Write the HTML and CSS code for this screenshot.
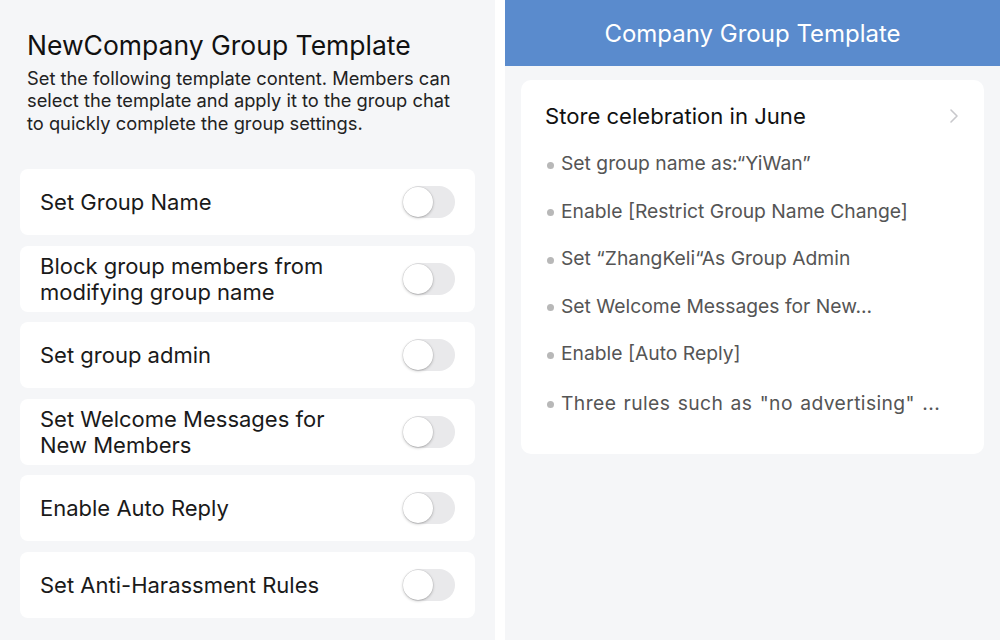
FILE: index.html
```html
<!DOCTYPE html>
<html>
<head>
<meta charset="utf-8">
<link rel="stylesheet" href="styles.css">
</head>
<body>
<div class="page">
  <section class="left">
    <h1 class="title">NewCompany Group Template</h1>
    <p class="desc">Set the following template content. Members can select the template and apply it to the group chat to quickly complete the group settings.</p>
    <div class="list">
      <div class="row"><span class="label">Set Group Name</span><span class="toggle"><span class="knob"></span></span></div>
      <div class="row"><span class="label">Block group members from modifying group name</span><span class="toggle"><span class="knob"></span></span></div>
      <div class="row"><span class="label">Set group admin</span><span class="toggle"><span class="knob"></span></span></div>
      <div class="row"><span class="label">Set Welcome Messages for New Members</span><span class="toggle"><span class="knob"></span></span></div>
      <div class="row"><span class="label">Enable Auto Reply</span><span class="toggle"><span class="knob"></span></span></div>
      <div class="row"><span class="label">Set Anti-Harassment Rules</span><span class="toggle"><span class="knob"></span></span></div>
    </div>
  </section>
  <section class="right">
    <header class="bar">Company Group Template</header>
    <div class="card">
      <div class="card-head">
        <span class="card-title">Store celebration in June</span>
        <svg class="chev" width="12" height="18" viewBox="0 0 12 18"><path d="M3 3 L9 9 L3 15" fill="none" stroke="#c8c8cc" stroke-width="1.6" stroke-linecap="round" stroke-linejoin="round"/></svg>
      </div>
      <ul class="items">
        <li>Set group name as:“YiWan”</li>
        <li>Enable [Restrict Group Name Change]</li>
        <li>Set “ZhangKeli“As Group Admin</li>
        <li>Set Welcome Messages for New...</li>
        <li>Enable [Auto Reply]</li>
        <li class="last">Three rules such as "no advertising" ...</li>
      </ul>
    </div>
  </section>
</div>
</body>
</html>
```

FILE: styles.css
```css
* { box-sizing: border-box; }
html, body { margin: 0; padding: 0; background: #ffffff; }
body { font-family: Inter, "Noto Sans", sans-serif; width: 1002px; height: 640px; overflow: hidden; }
.page { display: flex; height: 640px; }
.left { width: 495px; background: #f5f6f8; padding: 29px 20px 0 20px; }
.title { margin: 0 0 0 7px; font-size: 26.5px; font-weight: 400; line-height: 32px; color: #111; }
.desc { margin: 5.5px 0 0 7px; max-width: 440px; font-size: 18.3px; line-height: 22.5px; color: #222; }
.list { margin-top: 35px; display: flex; flex-direction: column; gap: 10.5px; }
.row { background: #fff; border-radius: 8px; height: 66px; display: flex; align-items: center; justify-content: space-between; padding: 0 20px; }
.label { font-size: 22px; line-height: 26px; color: #1a1a1a; max-width: 310px; }
.toggle { width: 52px; height: 32px; border-radius: 16px; background: #e9e9eb; position: relative; flex: none; }
.knob { position: absolute; left: 0; top: 1px; width: 30px; height: 30px; border-radius: 50%; background: #fff; box-shadow: 0 1px 3px rgba(0,0,0,0.25), 0 0 0 0.5px rgba(0,0,0,0.08); }
.right { width: 495px; margin-left: 10px; background: #f5f6f8; }
.bar { height: 66px; background: #5a8bcd; color: #fff; font-size: 24px; display: flex; align-items: center; justify-content: center; }
.card { margin: 14px 16px 0 16px; background: #fff; border-radius: 10px; padding: 21px 24px 26px 24px; }
.card-head { display: flex; align-items: center; justify-content: space-between; height: 30px; }
.card-title { font-size: 22.1px; color: #111; }
.items { list-style: none; margin: 9px 0 0 0; padding: 0; }
.items li { position: relative; padding-left: 16px; font-size: 19.3px; color: #555; height: 47.5px; line-height: 47.5px; white-space: nowrap; }
.items li.last { height: 50px; line-height: 50px; letter-spacing: 0.4px; word-spacing: 1.5px; }
.items li::before { content: ""; position: absolute; left: 2px; top: 50%; width: 7px; height: 7px; margin-top: -2px; border-radius: 50%; background: #b8b8b8; }
```
